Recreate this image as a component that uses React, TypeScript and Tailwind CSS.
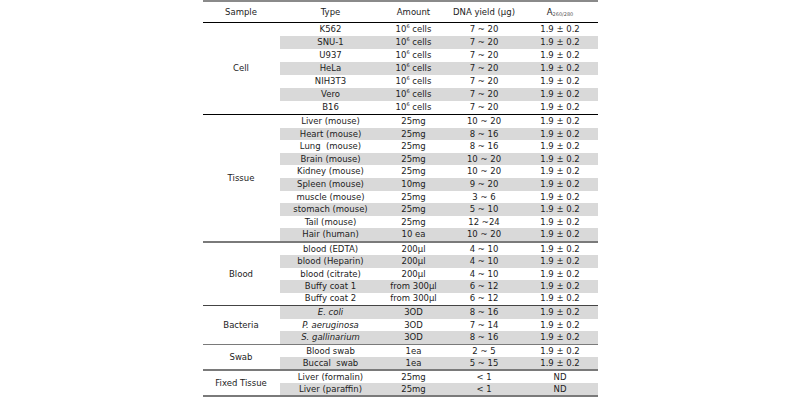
import React from "react";

type Row = {
  type: React.ReactNode;
  amount: React.ReactNode;
  yieldText: string;
  ratio: string;
  gray?: boolean;
};

type Group = {
  sample: string;
  rowH: string;
  border: string;
  rows: Row[];
};

const cells = (
  <>
    10<span className="text-[5px] align-top relative -top-[1px]">6</span> cells
  </>
);

const pm = "1.9 ± 0.2";

const groups: Group[] = [
  {
    sample: "Cell",
    rowH: "h-[13px]",
    border: "border-b border-black",
    rows: [
      { type: "K562", amount: cells, yieldText: "7 ~ 20", ratio: pm },
      { type: "SNU-1", amount: cells, yieldText: "7 ~ 20", ratio: pm, gray: true },
      { type: "U937", amount: cells, yieldText: "7 ~ 20", ratio: pm },
      { type: "HeLa", amount: cells, yieldText: "7 ~ 20", ratio: pm, gray: true },
      { type: "NIH3T3", amount: cells, yieldText: "7 ~ 20", ratio: pm },
      { type: "Vero", amount: cells, yieldText: "7 ~ 20", ratio: pm, gray: true },
      { type: "B16", amount: cells, yieldText: "7 ~ 20", ratio: pm },
    ],
  },
  {
    sample: "Tissue",
    rowH: "h-[12.6px]",
    border: "border-b-2 border-[#7a7a7a]",
    rows: [
      { type: "Liver (mouse)", amount: "25mg", yieldText: "10 ~ 20", ratio: pm },
      { type: "Heart (mouse)", amount: "25mg", yieldText: "8 ~ 16", ratio: pm, gray: true },
      { type: "Lung  (mouse)", amount: "25mg", yieldText: "8 ~ 16", ratio: pm },
      { type: "Brain (mouse)", amount: "25mg", yieldText: "10 ~ 20", ratio: pm, gray: true },
      { type: "Kidney (mouse)", amount: "25mg", yieldText: "10 ~ 20", ratio: pm },
      { type: "Spleen (mouse)", amount: "10mg", yieldText: "9 ~ 20", ratio: pm, gray: true },
      { type: "muscle (mouse)", amount: "25mg", yieldText: "3 ~ 6", ratio: pm },
      { type: "stomach (mouse)", amount: "25mg", yieldText: "5 ~ 10", ratio: pm, gray: true },
      { type: "Tail (mouse)", amount: "25mg", yieldText: "12 ~24", ratio: pm },
      { type: "Hair (human)", amount: "10 ea", yieldText: "10 ~ 20", ratio: pm, gray: true },
    ],
  },
  {
    sample: "Blood",
    rowH: "h-[12.4px]",
    border: "border-b border-[#444]",
    rows: [
      { type: "blood (EDTA)", amount: "200µl", yieldText: "4 ~ 10", ratio: pm },
      { type: "blood (Heparin)", amount: "200µl", yieldText: "4 ~ 10", ratio: pm, gray: true },
      { type: "blood (citrate)", amount: "200µl", yieldText: "4 ~ 10", ratio: pm },
      { type: "Buffy coat 1", amount: "from 300µl", yieldText: "6 ~ 12", ratio: pm, gray: true },
      { type: "Buffy coat 2", amount: "from 300µl", yieldText: "6 ~ 12", ratio: pm },
    ],
  },
  {
    sample: "Bacteria",
    rowH: "h-[12.7px]",
    border: "border-b border-[#7a7a7a]",
    rows: [
      { type: <i>E. coli</i>, amount: "3OD", yieldText: "8 ~ 16", ratio: pm, gray: true },
      { type: <i>P. aeruginosa</i>, amount: "3OD", yieldText: "7 ~ 14", ratio: pm },
      { type: <i>S. gallinarium</i>, amount: "3OD", yieldText: "8 ~ 16", ratio: pm, gray: true },
    ],
  },
  {
    sample: "Swab",
    rowH: "h-[12px]",
    border: "border-b-2 border-[#7a7a7a]",
    rows: [
      { type: "Blood swab", amount: "1ea", yieldText: "2 ~ 5", ratio: pm },
      { type: "Buccal  swab", amount: "1ea", yieldText: "5 ~ 15", ratio: pm, gray: true },
    ],
  },
  {
    sample: "Fixed Tissue",
    rowH: "h-[12px]",
    border: "border-b-2 border-[#7a7a7a]",
    rows: [
      { type: "Liver (formalin)", amount: "25mg", yieldText: "< 1", ratio: "ND" },
      { type: "Liver (paraffin)", amount: "25mg", yieldText: "< 1", ratio: "ND", gray: true },
    ],
  },
];

const cols = "grid grid-cols-[102px_64px_77px_75px]";

export default function App() {
  return (
    <div className="w-[800px] h-[400px] bg-white text-[#1c1c1c] text-[8.5px] leading-none font-['DejaVu_Sans',sans-serif]">
      <div className="mx-auto w-[395px] border-t-2 border-[#8a8a8a]">
        {/* Header */}
        <div className="flex h-[21px] items-center border-b border-black">
          <div className="w-[77px] text-center">Sample</div>
          <div className={`${cols} flex-1 text-center`}>
            <div>Type</div>
            <div>Amount</div>
            <div>DNA yield (µg)</div>
            <div className="flex justify-center items-end">
              <span>A</span>
              <span className="text-[5px] text-[#555] relative top-[1px]">260/280</span>
            </div>
          </div>
        </div>

        {groups.map((g) => (
          <div key={g.sample} className={`flex ${g.border}`}>
            <div className="w-[77px] flex items-center justify-center text-center">
              {g.sample}
            </div>
            <div className="flex-1 flex flex-col">
              {g.rows.map((r, i) => (
                <div
                  key={i}
                  className={`${cols} ${g.rowH} items-center text-center whitespace-pre ${
                    r.gray ? "bg-[#d9d9d9]" : ""
                  }`}
                >
                  <div>{r.type}</div>
                  <div>{r.amount}</div>
                  <div>{r.yieldText}</div>
                  <div>{r.ratio}</div>
                </div>
              ))}
            </div>
          </div>
        ))}
      </div>
    </div>
  );
}
